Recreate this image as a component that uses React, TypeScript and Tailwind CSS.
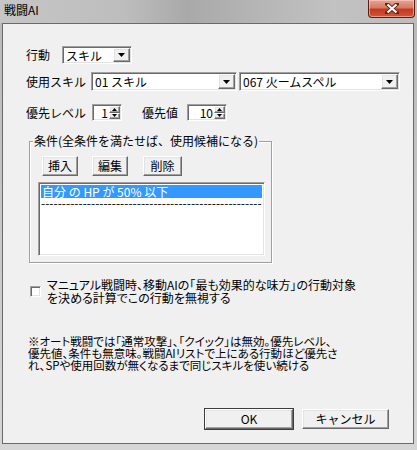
import React from 'react';

const sunken = 'border border-t-[#a0a0a0] border-l-[#a0a0a0] border-b-white border-r-white shadow-[inset_1px_1px_0_#696969,inset_-1px_-1px_0_#e3e3e3]';
const raised = 'border border-t-white border-l-white border-b-[#696969] border-r-[#696969] shadow-[inset_-1px_-1px_0_#a0a0a0,inset_1px_1px_0_#e3e3e3] bg-[#f0f0f0]';

function Arrow() {
    return (
        <svg width="7" height="4" viewBox="0 0 7 4">
            <polygon points="0,0 7,0 3.5,4" fill="#000" />
        </svg>
    );
}

function Combo({ value, className }: { value: string; className: string }) {
    return (
        <div className={`${sunken} ${className} bg-white flex items-stretch p-[1px]`}>
            <div className="flex-1 pl-[2px] leading-[15px] whitespace-nowrap">{value}</div>
            <div className={`${raised} w-[17px] flex items-center justify-center`}>
                <Arrow />
            </div>
        </div>
    );
}

function Spinner({ value, className }: { value: string; className: string }) {
    return (
        <div className={`${sunken} ${className} bg-white flex items-stretch p-[1px]`}>
            <div className="flex-1 text-right pr-[1px] leading-[13px] whitespace-nowrap">{value}</div>
            <div className="flex flex-col w-[11px]">
                <div className={`${raised} flex-1 flex items-center justify-center`}>
                    <svg width="5" height="3" viewBox="0 0 5 3"><polygon points="2.5,0 5,3 0,3" fill="#000" /></svg>
                </div>
                <div className={`${raised} flex-1 flex items-center justify-center`}>
                    <svg width="5" height="3" viewBox="0 0 5 3"><polygon points="0,0 5,0 2.5,3" fill="#000" /></svg>
                </div>
            </div>
        </div>
    );
}

function Btn({ label, className }: { label: string; className: string }) {
    return (
        <div className={`${raised} ${className} flex items-center justify-center leading-none`}>{label}</div>
    );
}

export default function App() {
    return (
        <div className="w-[417px] h-[450px] overflow-hidden relative flex flex-col bg-[linear-gradient(180deg,#b8b8b8_0%,#c4c4c4_40%,#d6d6d6_100%)] text-[12px] text-black [font-family:'Noto_Sans_CJK_JP','Noto_Sans',sans-serif]">
            {/* title bar */}
            <div className="h-[23px] flex items-start pl-[4px] pt-[3px] leading-[14px] bg-[linear-gradient(90deg,#c6c6c6_0%,#bdbdbd_30%,#a9a9a9_45%,#b4b4b4_60%,#c2c2c2_80%,#bcbcbc_100%)]">
                <span className="text-[12px]">戦闘AI</span>
            </div>
            <div className="absolute left-[368px] top-0 w-[47px] h-[18px] rounded-b-[4px] border border-t-0 border-[#5c1e12] bg-[linear-gradient(180deg,#e6a596_0%,#d87a64_45%,#c23a1f_55%,#d0573a_100%)] flex items-center justify-center shadow-[inset_0_0_0_1px_rgba(255,220,210,0.5)]">
                <svg width="14" height="11" viewBox="0 0 14 11">
                    <path d="M2 1 L12 10 M12 1 L2 10" stroke="#6a2416" strokeWidth="4" strokeLinecap="square" />
                    <path d="M2.5 1.5 L11.5 9.5 M11.5 1.5 L2.5 9.5" stroke="#fff" strokeWidth="2.2" />
                </svg>
            </div>

            {/* client */}
            <div className="ml-[2px] w-[412px] h-[421px] border border-[#6a6a6a] bg-[#f0f0f0] flex flex-col pl-[23px] pt-[22px]">
                <div className="flex items-center h-[18px]">
                    <div className="w-[36px] leading-none">行動</div>
                    <Combo value="スキル" className="w-[70px] h-[18px]" />
                </div>
                <div className="flex items-center h-[19px] mt-[8px]">
                    <div className="w-[65px] leading-none">使用スキル</div>
                    <Combo value="01 スキル" className="w-[146px] h-[19px]" />
                    <Combo value="067 火ームスペル" className="w-[161px] h-[19px] ml-[2px]" />
                </div>
                <div className="flex items-center h-[17px] mt-[13px]">
                    <div className="w-[66px] leading-none">優先レベル</div>
                    <Spinner value="1" className="w-[30px] h-[17px]" />
                    <div className="w-[45px] ml-[20px] leading-none">優先値</div>
                    <Spinner value="10" className="w-[40px] h-[17px]" />
                </div>

                {/* conditions group */}
                <div className="relative mt-[20px] ml-[3px] w-[243px] h-[122px] border border-[#a0a0a0] shadow-[inset_1px_1px_0_#fff,1px_1px_0_#fff] flex flex-col pl-[12px] pt-[14px]">
                    <div className="absolute -top-[8px] left-[3px] px-[1px] bg-[#f0f0f0] leading-[14px] whitespace-nowrap">条件(全条件を満たせば、使用候補になる)</div>
                    <div className="flex h-[20px]">
                        <Btn label="挿入" className="w-[36px]" />
                        <Btn label="編集" className="w-[36px] ml-[14px]" />
                        <Btn label="削除" className="w-[39px] ml-[15px]" />
                    </div>
                    <div className={`${sunken} bg-white w-[227px] h-[74px] mt-[6px] -ml-[4px] p-[2px] flex flex-col overflow-hidden`}>
                        <div className="bg-[#3399ff] text-white h-[13px] leading-[13px] pl-[1px] whitespace-nowrap">自分 の HP が 50% 以下</div>
                        <div className="h-[12px] leading-[10px] whitespace-nowrap overflow-hidden">------------------------------------------------------------------------</div>
                    </div>
                </div>

                {/* checkbox */}
                <div className="flex items-center mt-[15px] ml-[4px]">
                    <div className={`${sunken} w-[11px] h-[11px] bg-white`} />
                    <div className="ml-[6px] leading-[13px] whitespace-nowrap [font-feature-settings:'palt']">
                        マニュアル戦闘時、移動AIの「最も効果的な味方」の行動対象<br />を決める計算でこの行動を無視する
                    </div>
                </div>

                {/* note */}
                <div className="mt-[31px] ml-[2px] leading-[12px] text-[11.5px] whitespace-nowrap [font-feature-settings:'palt']">
                    ※オート戦闘では「通常攻撃」、「クイック」は無効。優先レベル、<br />
                    優先値、条件も無意味。戦闘AIリストで上にある行動ほど優先さ<br />
                    れ、SPや使用回数が無くなるまで同じスキルを使い続ける
                </div>

                <div className="mt-auto mb-[14px] mr-[24px] flex justify-end">
                    <Btn label="OK" className="w-[88px] h-[20px] outline outline-1 outline-[#3c3c3c]" />
                    <Btn label="キャンセル" className="w-[87px] h-[20px] ml-[9px]" />
                </div>
            </div>
        </div>
    );
}
